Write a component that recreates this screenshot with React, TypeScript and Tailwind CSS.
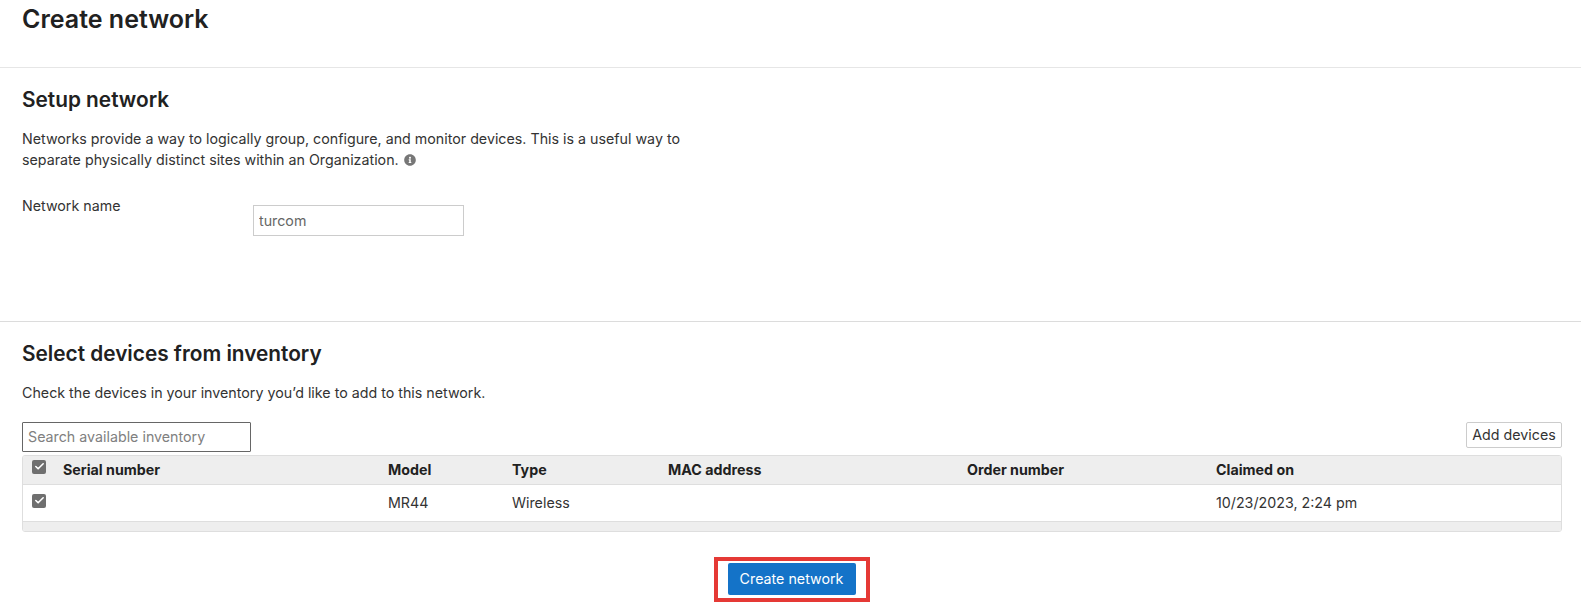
import { Check } from 'lucide-react';
import { FaInfoCircle } from 'react-icons/fa';

function CheckMark() {
  return (
    <span className="flex h-[14px] w-[14px] items-center justify-center rounded-[2px] bg-[#6f6f6f]">
      <Check size={11} strokeWidth={3.5} className="text-white" />
    </span>
  );
}

const gridCols = 'grid grid-cols-[40px_325px_124px_156px_299px_249px_1fr] items-center';

export default function App() {
  return (
    <div className="h-[607px] overflow-hidden bg-white font-['Inter',sans-serif] text-[14.25px] text-[#333333]">
      {/* Page title */}
      <div className="h-[68px] border-b border-[#e6e6e6] px-[22px] pt-[3px]">
        <h1 className="text-[25px] leading-[32px] font-semibold text-[#212121]">Create network</h1>
      </div>

      {/* Setup network */}
      <section className="h-[254px] border-b border-[#dcdcdc] px-[22px] pt-[18px]">
        <h2 className="text-[20.8px] leading-[28px] font-semibold text-[#212121]">Setup network</h2>
        <p className="mt-[14px] w-[690px] leading-[21px]">
          Networks provide a way to logically group, configure, and monitor devices. This is a useful way to separate physically distinct sites within an Organization.
          <FaInfoCircle size={12} className="ml-[5px] inline-block align-[-1px] text-[#777777]" />
        </p>
        <div className="mt-[35px] flex items-start">
          <label className="mt-[-10px] w-[231px] leading-[21px]">Network name</label>
          <input
            readOnly
            value="turcom"
            className="h-[31px] w-[211px] border border-[#cccccc] bg-white px-[5px] text-[14.25px] text-[#666666] outline-none"
          />
        </div>
      </section>

      {/* Select devices */}
      <section className="px-[19px] pt-[18px]">
        <h2 className="px-[3px] text-[20.8px] leading-[28px] font-semibold text-[#212121]">Select devices from inventory</h2>
        <p className="mt-[14px] px-[3px] leading-[21px]">Check the devices in your inventory you’d like to add to this network.</p>

        <div className="mt-[19px] flex items-start justify-between pl-[3px]">
          <input
            readOnly
            placeholder="Search available inventory"
            className="h-[30px] w-[229px] rounded-[1px] border border-[#666666] px-[5px] pb-[1px] text-[14.25px] outline-none placeholder:text-[#808080]"
          />
          <button className="h-[26px] w-[96px] rounded-[2px] border border-[#cccccc] bg-white pb-[1px] text-[14.25px] text-[#333333]">Add devices</button>
        </div>

        <div className="mt-[3px] ml-[3px] overflow-hidden rounded-[3px] border border-[#dedede]">
          <div className={`${gridCols} h-[29px] border-b border-[#dedede] bg-[#eeeeee] font-bold text-[#212121]`}>
            <span className="mt-[-7px] pl-[9px]"><CheckMark /></span>
            <span className="pb-[1px]">Serial number</span>
            <span className="pb-[1px]">Model</span>
            <span className="pb-[1px]">Type</span>
            <span className="pb-[1px]">MAC address</span>
            <span className="pb-[1px]">Order number</span>
            <span className="pb-[1px]">Claimed on</span>
          </div>
          <div className={`${gridCols} h-[37px] border-b border-[#dedede] bg-white`}>
            <span className="mt-[-5px] pl-[9px]"><CheckMark /></span>
            <span />
            <span className="pb-[1px]">MR44</span>
            <span className="pb-[1px]">Wireless</span>
            <span />
            <span />
            <span className="pb-[1px]">10/23/2023, 2:24 pm</span>
          </div>
          <div className="h-[9px] bg-[#eeeeee]" />
        </div>

        {/* Create button with highlight */}
        <div className="mt-[25px] flex justify-center pl-[2px]">
          <div className="border-[4px] border-[#e53935] px-[10px] pt-[2px] pb-[3px]">
            <button className="h-[32px] w-[128px] rounded-[2px] bg-[#1473c8] pb-[1px] text-[14.25px] text-white">Create network</button>
          </div>
        </div>
      </section>
    </div>
  );
}
